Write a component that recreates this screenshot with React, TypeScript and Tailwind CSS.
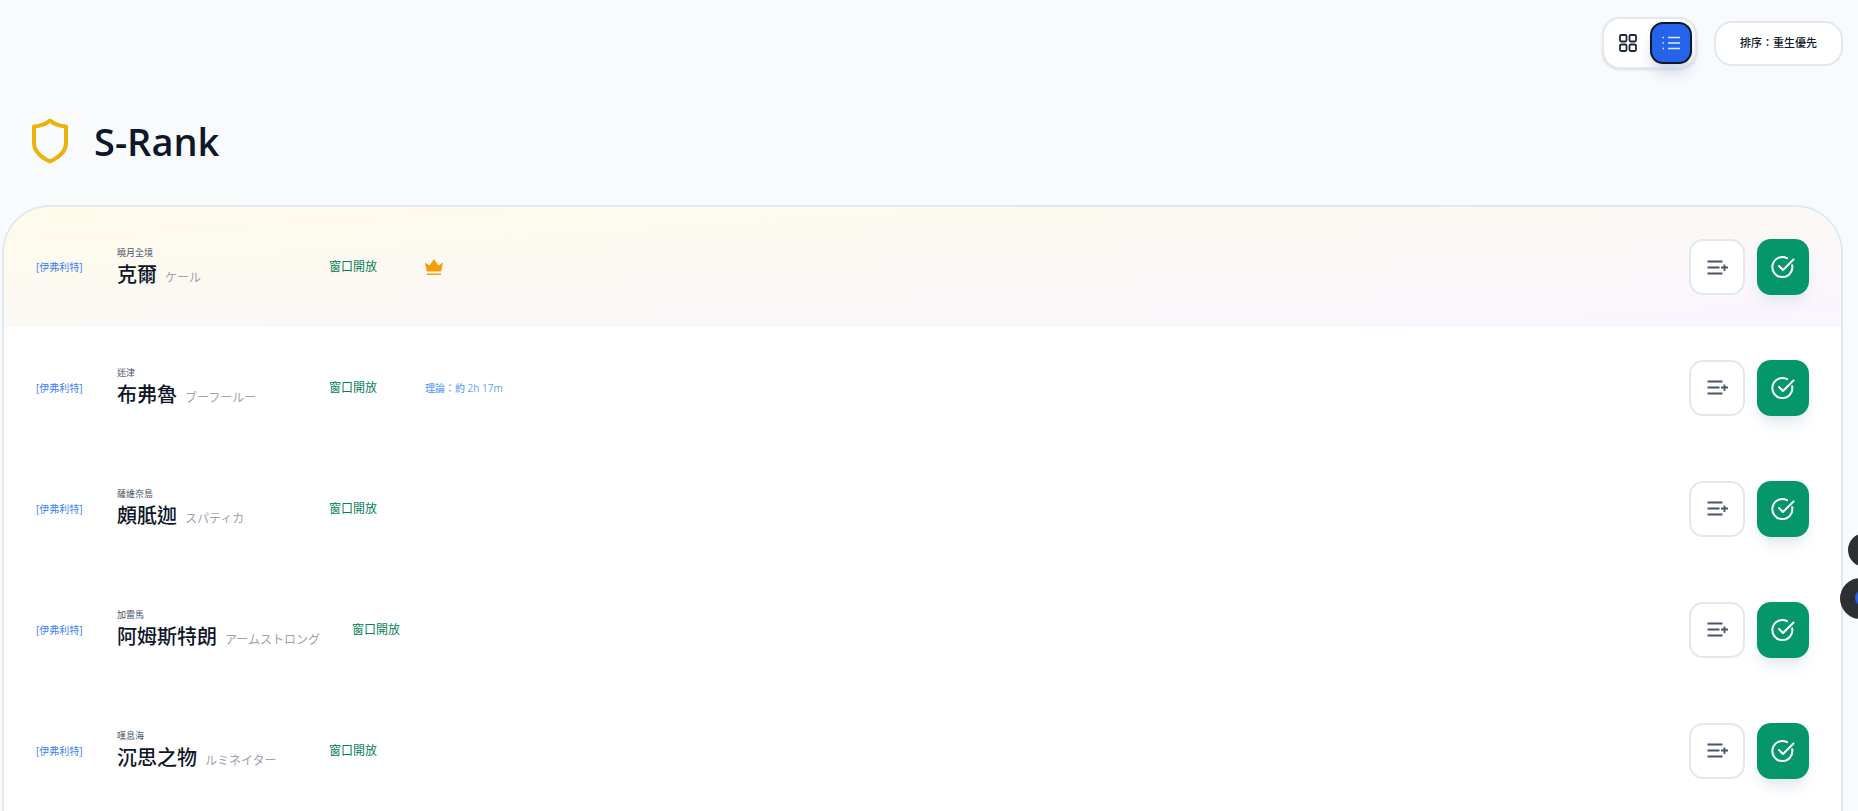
import React from "react";

const cjk = "font-['Segoe_UI','Open_Sans','Noto_Sans_CJK_TC',sans-serif]";

function GridIcon() {
  return (
    <svg width="18" height="18" viewBox="0 0 18 18" fill="none" stroke="#1e293b" strokeWidth="1.8">
      <rect x="1" y="1" width="6.5" height="6.5" rx="1.2" />
      <rect x="10.5" y="1" width="6.5" height="6.5" rx="1.2" />
      <rect x="1" y="10.5" width="6.5" height="6.5" rx="1.2" />
      <rect x="10.5" y="10.5" width="6.5" height="6.5" rx="1.2" />
    </svg>
  );
}

function ListIcon() {
  return (
    <svg width="18" height="14" viewBox="0 0 18 14" fill="none" stroke="#dbeafe" strokeWidth="1.6">
      <path d="M6 1.500h12M6 7h12M6 12.500h12" />
      <path d="M0.5 1.500h1.500M0.5 7h1.500M0.5 12.500h1.500" />
    </svg>
  );
}

function QueueIcon() {
  return (
    <svg width="21" height="15" viewBox="0 0 21 15" fill="none" stroke="#475569" strokeWidth="1.8">
      <path d="M0.5 1.500h15M0.5 7.500h12M0.5 13.500h15M14 7.500h7M17.500 4.500v6.500" />
    </svg>
  );
}

function CheckIcon() {
  return (
    <svg width="24" height="24" viewBox="0 0 24 24" fill="none" stroke="#ffffff" strokeWidth="2" strokeLinecap="round" strokeLinejoin="round">
      <path d="M21.2 10.200A10 10 0 1 1 16 3.200" />
      <path d="M8 11l4 4L22.500 4.500" />
    </svg>
  );
}

function Shield() {
  return (
    <svg width="38" height="46" viewBox="0 0 38 46" fill="none" stroke="#eab308" strokeWidth="4" strokeLinejoin="round">
      <path d="M19 2.500c4 3.600 9.500 5.600 16 6V25c0 8.500-6.500 14-16 18.500C9.500 39 3 33.500 3 25V8.500c6.500-.4 12-2.400 16-6z" />
    </svg>
  );
}

function Crown() {
  return (
    <svg width="18" height="17" viewBox="0 0 18 17" fill="#f59e0b">
      <path d="M0 3.500l4.500 3L9 0l4.500 6.500L18 3.500 16.200 12.500H1.800z" />
      <rect x="2" y="14.500" width="14" height="1.500" />
    </svg>
  );
}

type Row = {
  region: string;
  name: string;
  jp: string;
  extra?: "crown" | "time";
  statusClass: string;
};

const rows: Row[] = [
  { region: "曉月全境", name: "克爾", jp: "ケール", extra: "crown", statusClass: "w-[212px]" },
  { region: "迷津", name: "布弗魯", jp: "ブーフールー", extra: "time", statusClass: "w-[212px]" },
  { region: "薩維奈島", name: "頗胝迦", jp: "スパティカ", statusClass: "w-[212px]" },
  { region: "加雷馬", name: "阿姆斯特朗", jp: "アームストロング", statusClass: "w-auto mr-8" },
  { region: "嘆息海", name: "沉思之物", jp: "ルミネイター", statusClass: "w-[212px]" },
];

function RowItem({ row, first }: { row: Row; first: boolean }) {
  return (
    <div
      className={`flex shrink-0 items-center pl-[32px] pr-[32px] ${
        first ? "h-[120px] bg-gradient-to-br from-[#fefbea] to-[#faf5ff]" : "h-[121px] bg-white"
      }`}
    >
      <span className="w-[81px] shrink-0 text-[10px] leading-[14px] text-[#3b82f6]">[伊弗利特]</span>
      <div className={`flex shrink-0 flex-col ${row.statusClass}`}>
        <span className="text-[9px] leading-[12px] text-[#475569]">{row.region}</span>
        <div className="mt-[2px] flex items-baseline">
          <span className="text-[20px] font-medium leading-[27px] text-[#0f172a]">{row.name}</span>
          <span className="ml-2 text-[12px] leading-[14px] text-[#9ca3af]">{row.jp}</span>
        </div>
      </div>
      <span className="w-[96px] shrink-0 text-[12px] leading-[16px] text-[#05805a]">窗口開放</span>
      {row.extra === "crown" && <Crown />}
      {row.extra === "time" && <span className="text-[10px] font-medium leading-[14px] text-[#60a5fa]">理論：約 2h 17m</span>}
      <div className="ml-auto flex items-center gap-3">
        <button className="flex h-[56px] w-[56px] items-center justify-center rounded-[14px] border-2 border-[#e2e8f0] bg-white">
          <QueueIcon />
        </button>
        <button className="flex h-[56px] w-[52px] items-center justify-center rounded-[14px] bg-[#059669] shadow-lg shadow-slate-200">
          <CheckIcon />
        </button>
      </div>
    </div>
  );
}

export default function App() {
  return (
    <div className={`relative h-[811px] overflow-hidden bg-[#f8fafc] pr-[15px] ${cjk}`}>
      <div className="flex items-center justify-end gap-[17px] pt-[17px]">
        <div className="flex h-[52px] w-[95px] items-center justify-between rounded-[18px] border-2 border-[#e2e8f0] bg-white pl-[15px] pr-[3px] shadow-sm">
          <GridIcon />
          <div className="flex h-[42px] w-[42px] items-center justify-center rounded-[13px] border-2 border-[#0f172a] bg-[#2563eb] shadow-lg shadow-slate-300">
            <ListIcon />
          </div>
        </div>
        <button className="h-[45px] w-[129px] rounded-[18px] border-2 border-[#e2e8f0] bg-white text-[11px] font-medium text-[#0f172a]">
          排序：重生優先
        </button>
      </div>

      <div className="flex h-[136px] items-start pl-[31px] pt-[49px]">
        <Shield />
        <h2 className="ml-[25px] text-[38px] font-semibold leading-[46px] text-[#0f172a]">S-Rank</h2>
      </div>

      <div className="ml-[2px] flex flex-col overflow-hidden rounded-t-[48px] border-x-2 border-t-2 border-[#e2e8f0] bg-white">
        {rows.map((r, i) => (
          <RowItem key={r.region} row={r} first={i === 0} />
        ))}
      </div>

      <div className="absolute left-[1848px] top-[533px] h-[34px] w-[34px] rounded-full bg-[#2d2f33]" />
      <div className="absolute left-[1840px] top-[578px] h-[41px] w-[41px] rounded-full bg-[#2d2f33]">
        <div className="absolute left-[15px] top-[12px] h-[16px] w-[16px] rounded-full bg-[#2563eb]" />
      </div>
    </div>
  );
}
